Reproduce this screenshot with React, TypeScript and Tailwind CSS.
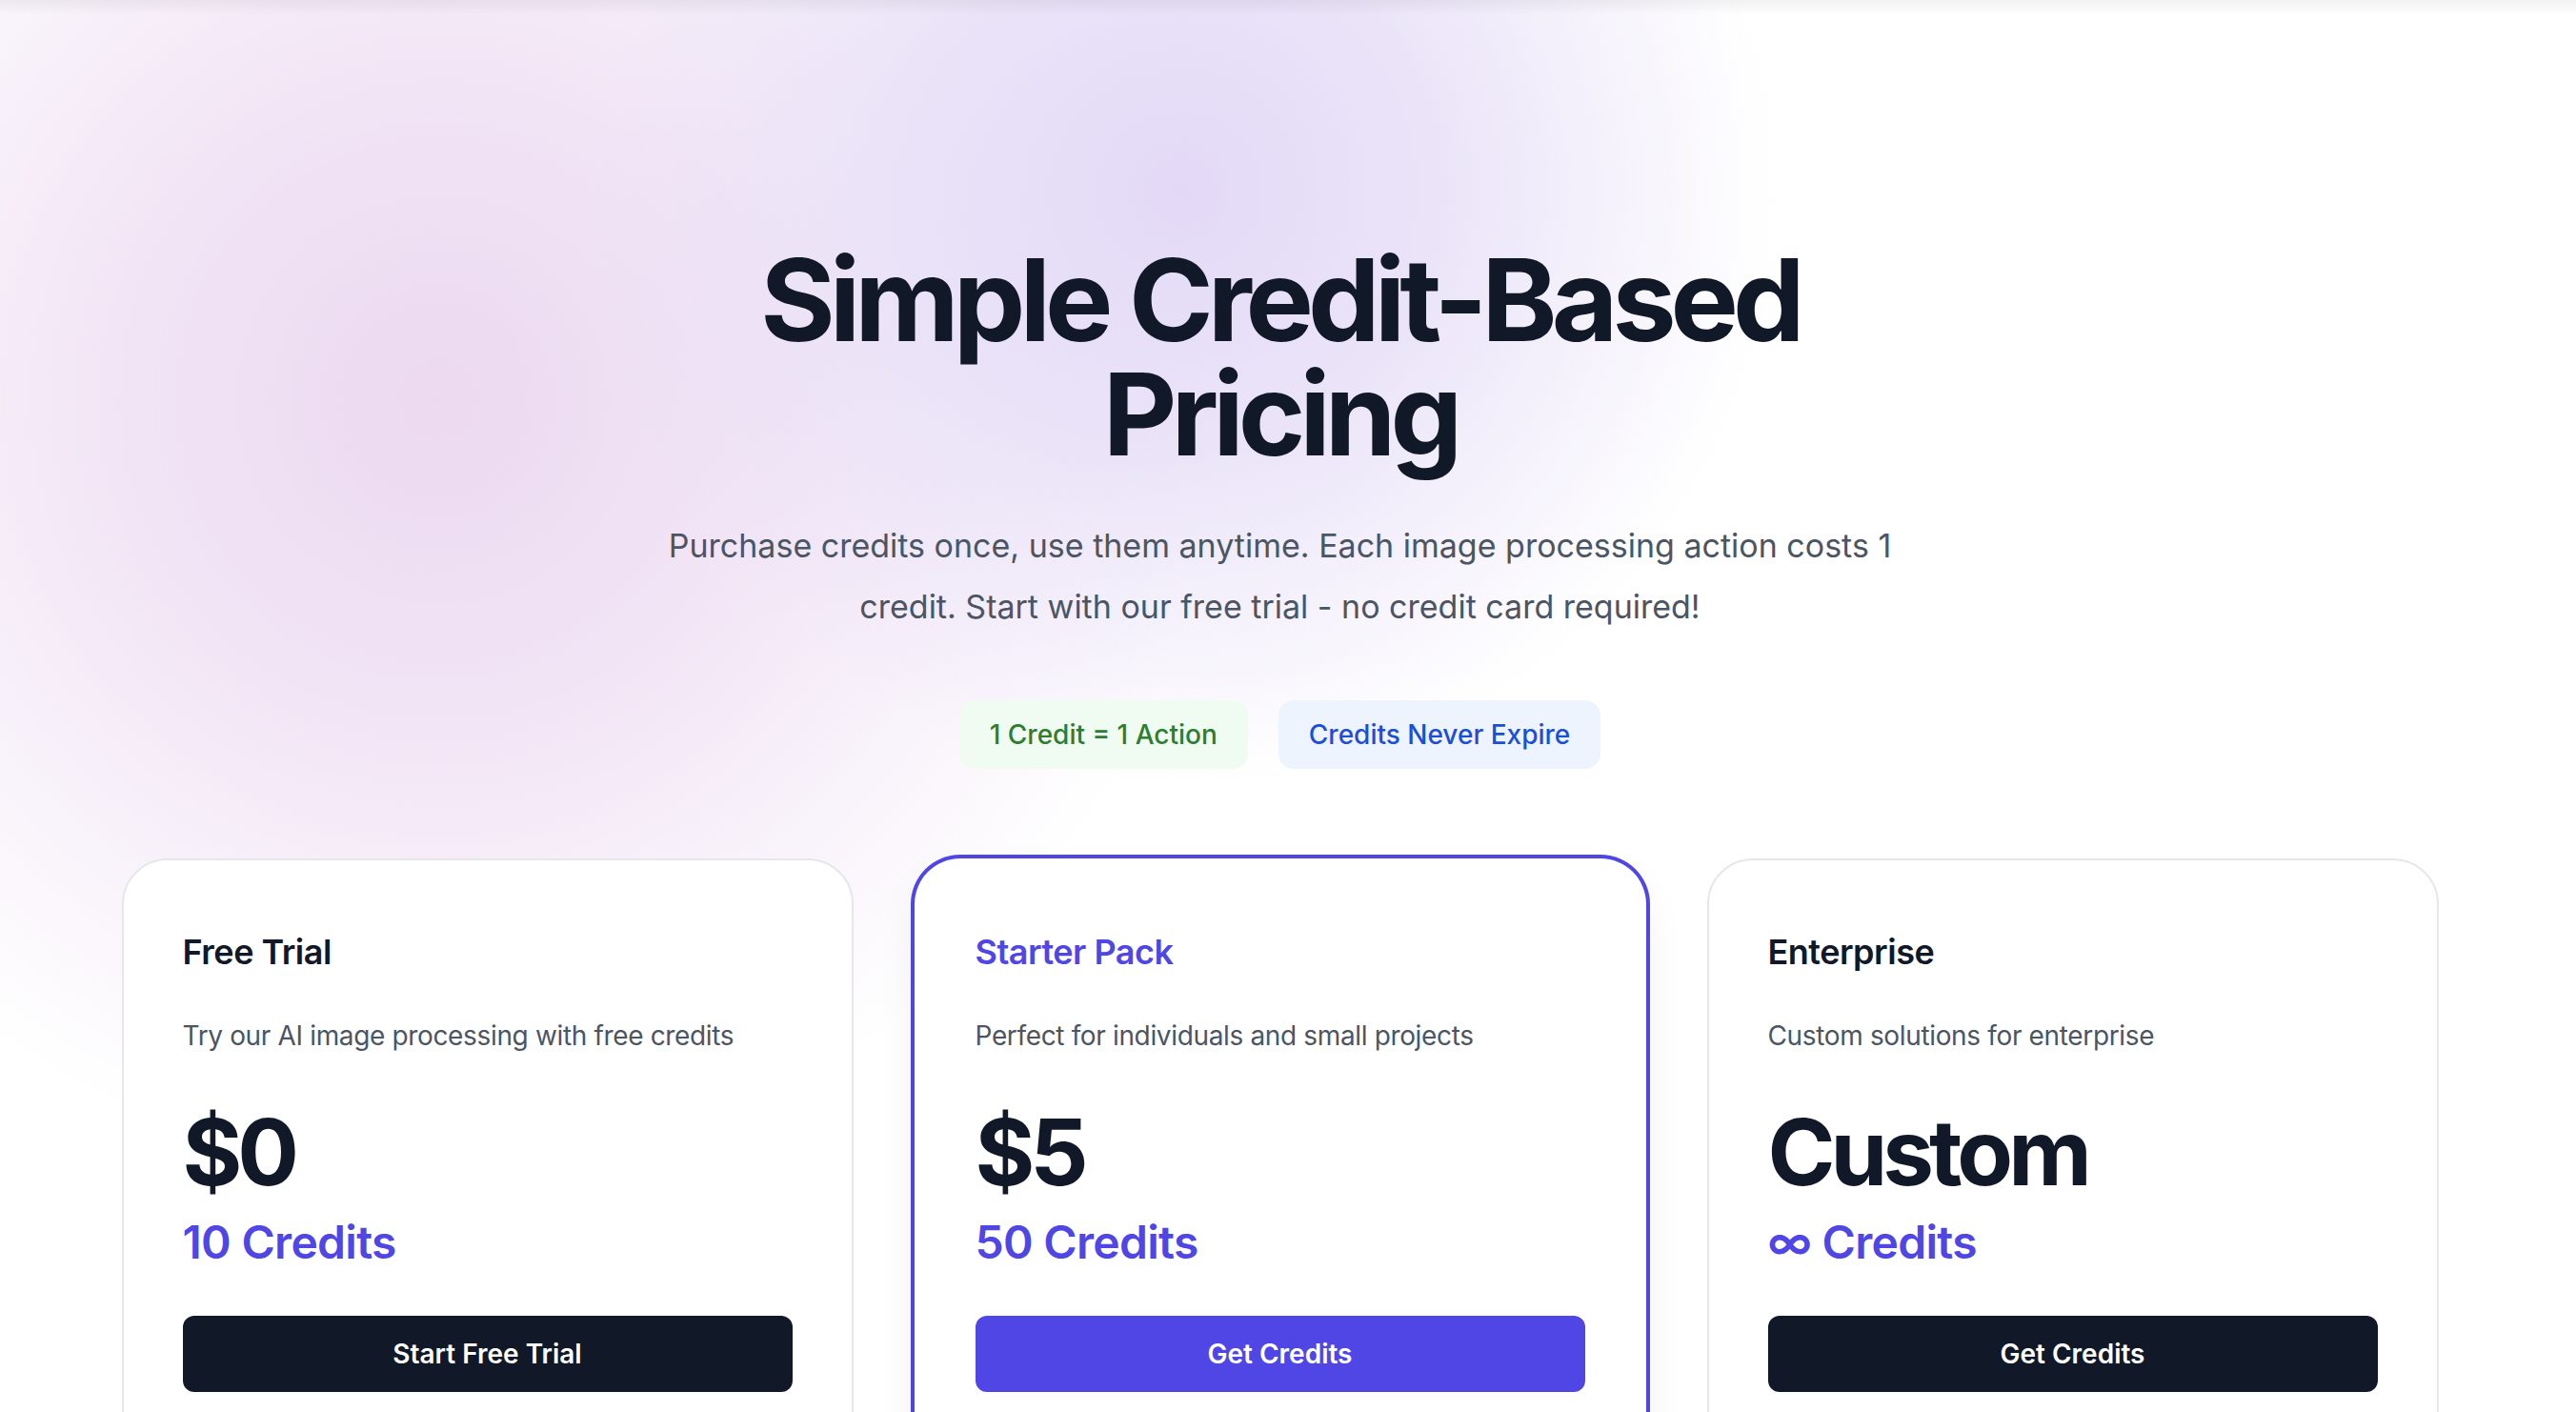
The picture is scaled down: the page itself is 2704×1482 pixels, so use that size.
import React from 'react';

type Plan = {
  name: string;
  description: string;
  price: string;
  credits: string;
  cta: string;
  featured?: boolean;
};

const plans: Plan[] = [
  {
    name: 'Free Trial',
    description: 'Try our AI image processing with free credits',
    price: '$0',
    credits: '10 Credits',
    cta: 'Start Free Trial',
  },
  {
    name: 'Starter Pack',
    description: 'Perfect for individuals and small projects',
    price: '$5',
    credits: '50 Credits',
    cta: 'Get Credits',
    featured: true,
  },
  {
    name: 'Enterprise',
    description: 'Custom solutions for enterprise',
    price: 'Custom',
    credits: '∞ Credits',
    cta: 'Get Credits',
  },
];

function PlanCard({ plan }: { plan: Plan }) {
  return (
    <div
      className={`h-[700px] rounded-[48px] bg-white px-[62px] pt-[68px] pb-[64px] ${
        plan.featured
          ? 'border-[2px] border-transparent ring-[4px] ring-[#4f46e5] shadow-[0_20px_50px_-10px_rgba(0,0,0,0.10)]'
          : 'border-[2px] border-[#e5e7eb]'
      }`}
    >
      <h3
        className={`text-[36px] leading-[56px] font-semibold tracking-[-0.5px] ${
          plan.featured ? 'text-[#4f46e5]' : 'text-[#111827]'
        }`}
      >
        {plan.name}
      </h3>
      <p className="mt-[40px] text-[28px] leading-[40px] tracking-[-0.35px] text-[#4b5563]">{plan.description}</p>
      <div className="mt-[54px] text-[96px] leading-[96px] font-bold tracking-[-5px] text-[#111827]">
        {plan.price}
      </div>
      <div className="mt-[15px] text-[48px] leading-[64px] font-semibold tracking-[-0.7px] text-[#4f46e5]">
        {plan.credits}
      </div>
      <button
        className={`mt-[45px] w-full rounded-[12px] py-[20px] text-[28px] leading-[40px] font-semibold text-white ${
          plan.featured ? 'bg-[#4f46e5]' : 'bg-[#111827]'
        }`}
      >
        {plan.cta}
      </button>
    </div>
  );
}

export default function App() {
  return (
    <div className="relative h-[1482px] overflow-hidden bg-white font-['Inter',sans-serif]">
      {/* soft background glow */}
      <div className="pointer-events-none absolute left-[-440px] top-[-480px] h-[1800px] w-[1800px] rounded-full bg-[radial-gradient(circle_at_center,#ecd9f0_0%,rgba(238,222,243,0.8)_26%,rgba(255,255,255,0)_64%)]" />
      <div className="pointer-events-none absolute left-[590px] top-[-450px] h-[1300px] w-[1300px] rounded-full bg-[radial-gradient(circle_at_center,#e3d9f7_0%,rgba(230,222,247,0.8)_30%,rgba(255,255,255,0)_68%)]" />
      <div className="pointer-events-none absolute inset-x-0 top-0 h-[16px] bg-gradient-to-b from-[rgba(0,0,0,0.05)] to-transparent" />

      <div className="relative pr-[17px]">
        <div className="mx-auto max-w-[2560px] px-[64px] pt-[255px]">
          <h1 className="text-center text-[120px] leading-[120px] font-bold tracking-[-6px] text-[#111827]">
            Simple Credit-Based
            <br />
            Pricing
          </h1>
          <p className="mx-auto mt-[46px] max-w-[1344px] text-center text-[34px] leading-[64px] text-[#4b5563]">
            Purchase credits once, use them anytime. Each image processing action costs 1 credit. Start with our free
            trial - no credit card required!
          </p>
          <div className="mt-[66px] flex justify-center gap-[32px]">
            <span className="rounded-[16px] bg-[#f0fbf2] px-[32px] py-[16px] text-[28px] leading-[40px] font-medium text-[#2e7d32]">
              1 Credit = 1 Action
            </span>
            <span className="rounded-[16px] bg-[#eef4fe] px-[32px] py-[16px] text-[28px] leading-[40px] font-medium text-[#1d4ed8]">
              Credits Never Expire
            </span>
          </div>

          <div className="mt-[94px] grid grid-cols-3 gap-[64px]">
            {plans.map((plan) => (
              <PlanCard key={plan.name} plan={plan} />
            ))}
          </div>
        </div>
      </div>
    </div>
  );
}
